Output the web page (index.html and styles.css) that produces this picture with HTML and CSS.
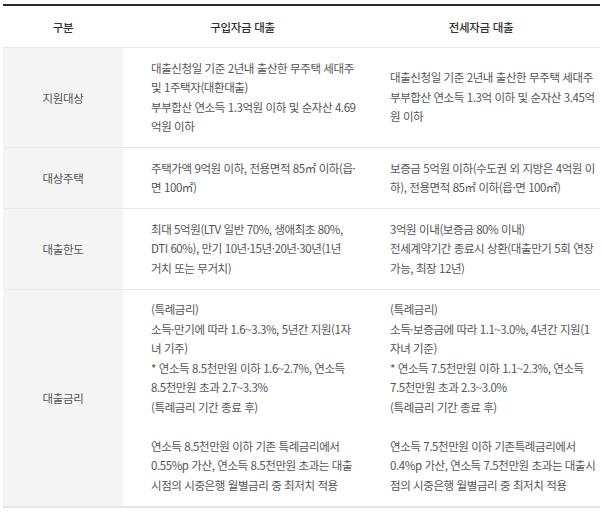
FILE: index.html
```html
<!DOCTYPE html>
<html lang="ko">
<head>
<meta charset="utf-8">
<title>신생아 특례대출</title>
<link rel="stylesheet" href="styles.css">
</head>
<body>
<table class="loan-table">
  <colgroup>
    <col class="c-label">
    <col class="c-buy">
    <col class="c-rent">
  </colgroup>
  <thead>
    <tr>
      <th>구분</th>
      <th>구입자금 대출</th>
      <th>전세자금 대출</th>
    </tr>
  </thead>
  <tbody>
    <tr>
      <th scope="row">지원대상</th>
      <td>대출신청일 기준 2년내 출산한 무주택 세대주 및 1주택자(대환대출)<br>부부합산 연소득 1.3억원 이하 및 순자산 4.69억원 이하</td>
      <td>대출신청일 기준 2년내 출산한 무주택 세대주<br>부부합산 연소득 1.3억 이하 및 순자산 3.45억원 이하</td>
    </tr>
    <tr>
      <th scope="row">대상주택</th>
      <td>주택가액 9억원 이하, 전용면적 85㎡ 이하(읍·면 100㎡)</td>
      <td>보증금 5억원 이하(수도권 외 지방은 4억원 이하), 전용면적 85㎡ 이하(읍·면 100㎡)</td>
    </tr>
    <tr>
      <th scope="row">대출한도</th>
      <td>최대 5억원(LTV 일반 70%, 생애최초 80%, DTI 60%), 만기 10년·15년·20년·30년(1년 <span class="nowrap">거치</span> 또는 무거치)</td>
      <td>3억원 이내(보증금 80% 이내)<br>전세계약기간 종료시 상환(대출만기 5회 연장 가능, 최장 12년)</td>
    </tr>
    <tr>
      <th scope="row">대출금리</th>
      <td>(특례금리)<br>소득·만기에 따라 1.6~3.3%, 5년간 지원(1자녀 기주)<br>* 연소득 8.5천만원 이하 1.6~2.7%, 연소득 8.5천만원 초과 2.7~3.3%<br>(특례금리 기간 종료 후)<br><br>연소득 8.5천만원 이하 기존 특례금리에서 0.55%p 가산, 연소득 8.5천만원 초과는 대출 시점의 시중은행 월별금리 중 최저치 적용</td>
      <td>(특례금리)<br>소득·보증금에 따라 1.1~3.0%, 4년간 지원(1자녀 기준)<br>* 연소득 7.5천만원 이하 1.1~2.3%, 연소득 7.5천만원 초과 2.3~3.0%<br>(특례금리 기간 종료 후)<br><br>연소득 7.5천만원 이하 기존특례금리에서 0.4%p 가산, 연소득 7.5천만원 초과는 대출시점의 시중은행 월별금리 중 최저치 적용</td>
    </tr>
  </tbody>
</table>
</body>
</html>
```

FILE: styles.css
```css
html, body {
  margin: 0;
  padding: 0;
  background: #ffffff;
}

body {
  padding: 4px 2px 0 3px;
  font-family: "Noto Sans CJK KR", "Noto Sans", sans-serif;
}

.loan-table {
  width: 597px;
  border-collapse: collapse;
  table-layout: fixed;
  border-top: 2px solid #2b2b2b;
  border-bottom: 2px solid #e6e6e6;
}

.c-label { width: 120px; }
.c-buy { width: 239px; }
.c-rent { width: 238px; }

.loan-table thead th {
  height: 41px;
  padding: 0;
  font-size: 11.5px;
  font-weight: 500;
  color: #333333;
  text-align: center;
  letter-spacing: -0.3px;
  border-bottom: 1px solid #e6e6e6;
  vertical-align: middle;
}

.loan-table tbody th {
  background: #f4f4f4;
  font-size: 11.5px;
  font-weight: 400;
  color: #555555;
  text-align: center;
  letter-spacing: -0.3px;
  vertical-align: middle;
  border-bottom: 1px solid #ececec;
  padding: 0;
}

.loan-table tbody tr:last-child th,
.loan-table tbody tr:last-child td {
  border-bottom: none;
}

.loan-table td {
  padding: 10.5px 4px 10.5px 28px;
  font-size: 11.5px;
  line-height: 19.5px;
  letter-spacing: -0.42px;
  color: #555555;
  vertical-align: middle;
  text-align: left;
  border-bottom: 1px solid #e6e6e6;
  word-break: normal;
}

.nowrap {
  white-space: nowrap;
}
```
